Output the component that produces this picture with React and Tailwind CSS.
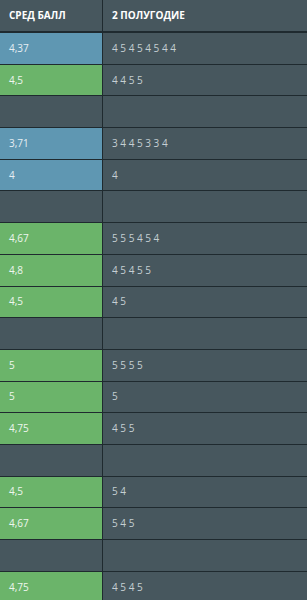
const rows = [
  { avg: "4,37", marks: "4 5 4 5 4 5 4 4", tone: "blue" },
  { avg: "4,5", marks: "4 4 5 5", tone: "green" },
  null,
  { avg: "3,71", marks: "3 4 4 5 3 3 4", tone: "blue" },
  { avg: "4", marks: "4", tone: "blue" },
  null,
  { avg: "4,67", marks: "5 5 5 4 5 4", tone: "green" },
  { avg: "4,8", marks: "4 5 4 5 5", tone: "green" },
  { avg: "4,5", marks: "4 5", tone: "green" },
  null,
  { avg: "5", marks: "5 5 5 5", tone: "green" },
  { avg: "5", marks: "5", tone: "green" },
  { avg: "4,75", marks: "4 5 5", tone: "green" },
  null,
  { avg: "4,5", marks: "5 4", tone: "green" },
  { avg: "4,67", marks: "5 4 5", tone: "green" },
  null,
  { avg: "4,75", marks: "4 5 4 5", tone: "green" },
];

const toneClass = {
  blue: "bg-[#5f97b2] text-[#e6eef2]",
  green: "bg-[#6bb46a] text-[#eef6ee]",
};

export default function App() {
  return (
    <div
      className="w-[307px] h-[600px] overflow-hidden bg-[#47575e] text-[10px]"
      style={{ fontFamily: '"Open Sans", "Noto Sans", sans-serif' }}
    >
      <div className="flex h-[33px] border-b-2 border-[#1f2a2f]">
        <div className="w-[103px] border-r border-[#1f2a2f] flex items-center pl-[9px] font-bold text-white">
          СРЕД БАЛЛ
        </div>
        <div className="flex-1 flex items-center pl-[9px] font-bold text-white">2 ПОЛУГОДИЕ</div>
      </div>
      {rows.map((r, i) => (
        <div key={i} className="flex h-[31.7px] border-b border-[#1f2a2f]">
          <div
            className={`w-[103px] border-r border-[#1f2a2f] flex items-center pl-[9px] ${
              r ? toneClass[r.tone] : ""
            }`}
          >
            {r?.avg}
          </div>
          <div className="flex-1 flex items-center pl-[9px] text-[#c5cfd3]">{r?.marks}</div>
        </div>
      ))}
    </div>
  );
}
